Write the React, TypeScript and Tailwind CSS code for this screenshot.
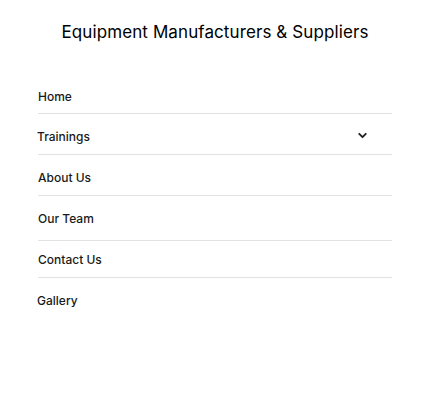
import { ChevronDown } from "lucide-react";

const font = { fontFamily: '"Inter", "Noto Sans", sans-serif' };

export default function App() {
  return (
    <div className="h-[413px] w-[430px] bg-white text-[#111]" style={font}>
      <header className="flex h-[66px] items-center justify-center">
        <h1 className="text-[17px] font-normal tracking-[0.1px] text-black">
          Equipment Manufacturers &amp; Suppliers
        </h1>
      </header>

      <nav className="mt-[12px] px-[38px]">
        <ul className="text-[12px] font-medium text-[#1a1a1a]">
          <li className="flex h-[36px] items-center border-b border-[#e2e2e2] pt-[2px]">
            <span>Home</span>
          </li>
          <li className="flex h-[41px] items-center justify-between border-b border-[#e2e2e2] pt-[5px]">
            <span className="-ml-px">Trainings</span>
            <ChevronDown size={13} strokeWidth={3.5} className="mr-[23px] -mt-[2px] text-[#222]" />
          </li>
          <li className="flex h-[41px] items-center border-b border-[#e2e2e2] pt-[5px]">
            <span>About Us</span>
          </li>
          <li className="flex h-[45px] items-center border-b border-[#e2e2e2] pt-[1px]">
            <span>Our Team</span>
          </li>
          <li className="flex h-[37px] items-center border-b border-[#e2e2e2] pt-[1px]">
            <span>Contact Us</span>
          </li>
          <li className="flex h-[44px] items-center pt-[1px]">
            <span className="-ml-px">Gallery</span>
          </li>
        </ul>
      </nav>
    </div>
  );
}
